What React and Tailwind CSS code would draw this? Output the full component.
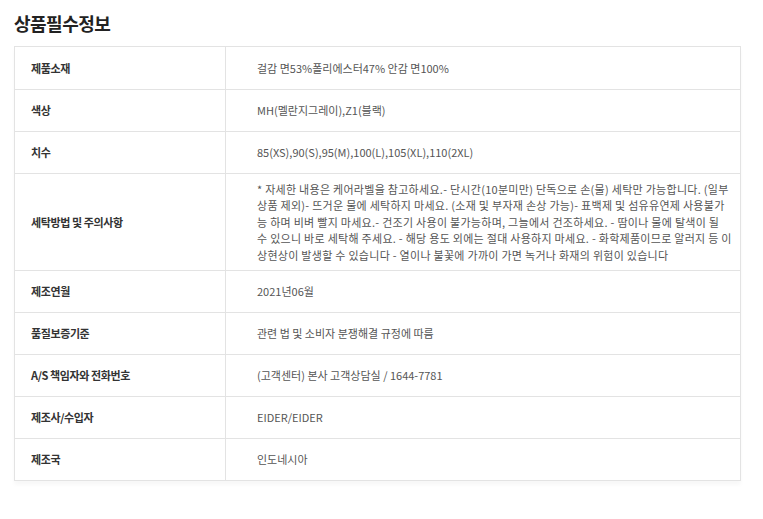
const rows = [
    { label: '제품소재', value: '걸감 면53%폴리에스터47% 안감 면100%' },
    { label: '색상', value: 'MH(멜란지그레이),Z1(블랙)' },
    { label: '치수', value: '85(XS),90(S),95(M),100(L),105(XL),110(2XL)' },
    {
        label: '세탁방법 및 주의사항',
        lines: [
            '* 자세한 내용은 케어라벨을 참고하세요.- 단시간(10분미만) 단독으로 손(물) 세탁만 가능합니다. (일부',
            '상품 제외)- 뜨거운 물에 세탁하지 마세요. (소재 및 부자재 손상 가능)- 표백제 및 섬유유연제 사용불가',
            '능 하며 비벼 빨지 마세요.- 건조기 사용이 불가능하며, 그늘에서 건조하세요. - 땀이나 물에 탈색이 될',
            '수 있으니 바로 세탁해 주세요. - 해당 용도 외에는 절대 사용하지 마세요. - 화학제품이므로 알러지 등 이',
            '상현상이 발생할 수 있습니다 - 열이나 불꽃에 가까이 가면 녹거나 화재의 위험이 있습니다',
        ],
    },
    { label: '제조연월', value: '2021년06월' },
    { label: '품질보증기준', value: '관련 법 및 소비자 분쟁해결 규정에 따름' },
    { label: 'A/S 책임자와 전화번호', value: '(고객센터) 본사 고객상담실 / 1644-7781' },
    { label: '제조사/수입자', value: 'EIDER/EIDER' },
    { label: '제조국', value: '인도네시아' },
];

function App() {
    return (
        <div className="min-h-screen bg-white font-['Noto_Sans_CJK_KR','Noto_Sans',sans-serif] px-[14px] pt-[11px] pr-[22px]">
            <h2 className="text-[18px] font-bold text-[#222] leading-[24px] tracking-[-0.5px]">상품필수정보</h2>

            {/* Table */}
            <div className="mt-[11px] border border-[#e3e3e3] shadow-[0_4px_4px_rgba(0,0,0,0.03)]">
                {rows.map((row, i) => (
                    <div
                        key={row.label}
                        className={`flex ${i > 0 ? 'border-t border-[#e3e3e3]' : ''}`}
                    >
                        <div className="w-[211px] shrink-0 flex items-center pl-[16px] text-[11px] font-bold text-[#333] tracking-[-0.4px] border-r border-[#e3e3e3]">
                            {row.label}
                        </div>
                        {row.lines ? (
                            <div className="flex-1 pl-[31px] py-[7px] text-[11px] leading-[16.4px] text-[#555] tracking-[0.28px]">
                                {row.lines.map((line) => (
                                    <div key={line} className="whitespace-nowrap">{line}</div>
                                ))}
                            </div>
                        ) : (
                            <div className={`flex-1 flex items-center pl-[31px] text-[11px] text-[#555] tracking-[0px] ${i === 0 ? 'h-[42px]' : 'h-[41px]'}`}>
                                {row.value}
                            </div>
                        )}
                    </div>
                ))}
            </div>
        </div>
    );
}

export default App;
